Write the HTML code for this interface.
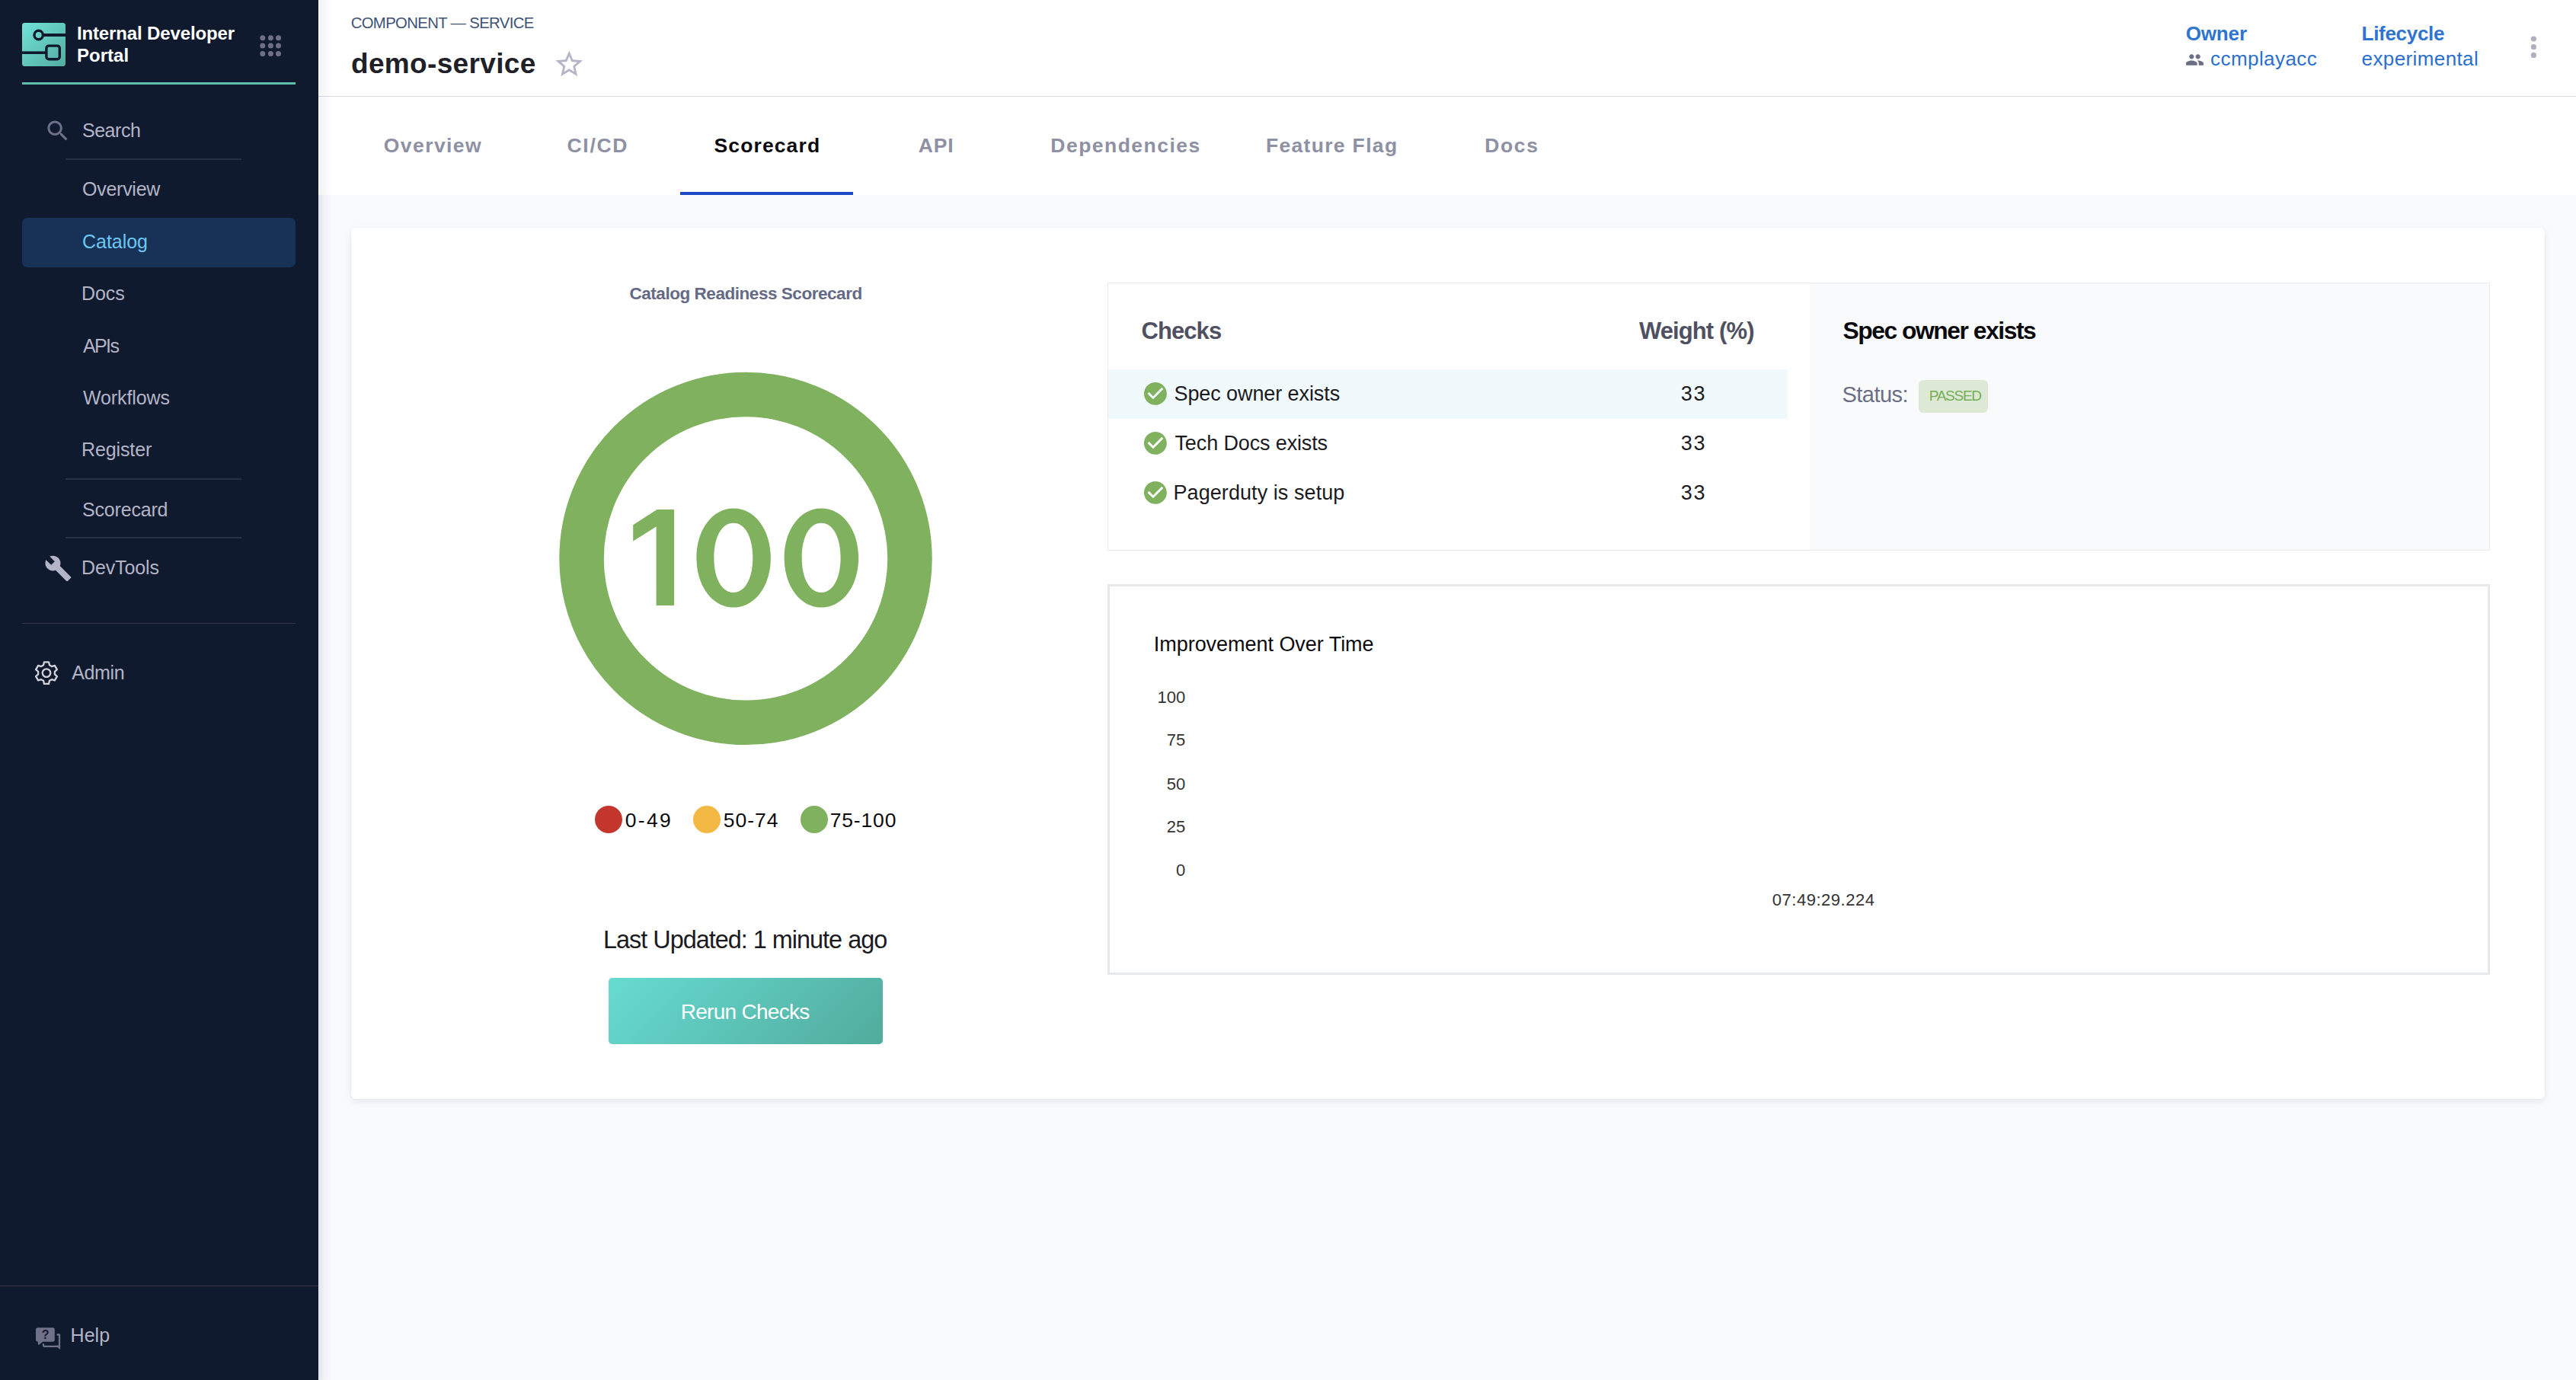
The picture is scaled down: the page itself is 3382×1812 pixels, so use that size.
<!DOCTYPE html>
<html><head><meta charset="utf-8"><title>demo-service | Scorecard</title>
<style>
html,body{margin:0;padding:0;width:3382px;height:1812px;overflow:hidden;background:#f9fafd;font-family:"Liberation Sans",sans-serif}
.a{position:absolute}
.t{position:absolute;white-space:nowrap;font-family:"Liberation Sans",sans-serif}
</style></head><body>
<!-- sidebar -->
<div class="a" style="left:0;top:0;width:418px;height:1812px;background:#0f1a2e;box-shadow:1px 0 8px rgba(20,30,60,0.10)"></div>
<!-- logo -->
<svg class="a" style="left:29px;top:30px" width="57" height="57" viewBox="0 0 57 57">
<defs><linearGradient id="lg" gradientUnits="userSpaceOnUse" x1="0" y1="0" x2="57" y2="57"><stop offset="0" stop-color="#6fe3d8"/><stop offset="1" stop-color="#55ab9f"/></linearGradient></defs>
<rect x="0" y="0" width="57" height="57" rx="3.5" fill="url(#lg)"/>
<line x1="26" y1="16" x2="57" y2="16" stroke="#0f1a2e" stroke-width="4"/>
<circle cx="21.7" cy="16" r="5.7" fill="url(#lg)" stroke="#0f1a2e" stroke-width="3.4"/>
<line x1="0" y1="39.2" x2="32" y2="39.2" stroke="#0f1a2e" stroke-width="3.6"/>
<rect x="31.9" y="30.1" width="17.4" height="17.7" rx="3.3" fill="url(#lg)" stroke="#0f1a2e" stroke-width="3.4"/>
</svg>
<!-- 9 dots -->
<svg class="a" style="left:338px;top:43px" width="34" height="34" viewBox="338 43 34 34" fill="#6f7088">
<circle cx="344.8" cy="49.7" r="3.5"/><circle cx="355.4" cy="49.7" r="3.5"/><circle cx="365.5" cy="49.7" r="3.5"/>
<circle cx="344.8" cy="60.1" r="3.5"/><circle cx="355.4" cy="60.1" r="3.5"/><circle cx="365.5" cy="60.1" r="3.5"/>
<circle cx="344.8" cy="70.4" r="3.5"/><circle cx="355.4" cy="70.4" r="3.5"/><circle cx="365.5" cy="70.4" r="3.5"/>
</svg>
<div class="a" style="left:29px;top:108px;width:359px;height:3px;background:#5ebfa9"></div>
<!-- search icon -->
<svg class="a" style="left:57.8px;top:153.8px" width="35.7" height="35.7" viewBox="0 0 24 24"><path fill="#6e7089" d="M15.5 14h-.79l-.28-.27C15.41 12.59 16 11.11 16 9.5 16 5.91 13.09 3 9.5 3S3 5.91 3 9.5 5.91 16 9.5 16c1.61 0 3.09-.59 4.23-1.570l.27.28v.79l5 4.99L20.49 19l-4.99-5zm-6 0C7.010 14 5 11.99 5 9.5S7.01 5 9.5 5 14 7.01 14 9.5 11.99 14 9.5 14z"/></svg>
<div class="a" style="left:86px;top:208px;width:231px;height:2px;background:#283043"></div>
<!-- catalog highlight -->
<div class="a" style="left:29px;top:286px;width:359px;height:65px;background:#183157;border-radius:7px"></div>
<div class="a" style="left:86px;top:628px;width:231px;height:2px;background:#283043"></div>
<div class="a" style="left:86px;top:705px;width:231px;height:2px;background:#283043"></div>
<!-- wrench -->
<svg class="a" style="left:57.5px;top:727.5px" width="36.8" height="36.8" viewBox="0 0 24 24"><path fill="#b3b4c6" d="M22.7 19l-9.1-9.1c.9-2.3.4-5-1.5-6.9-2-2-5-2.4-7.4-1.3L9 6 6 9 1.6 4.7C.4 7.1.9 10.1 2.9 12.1c1.9 1.9 4.6 2.4 6.9 1.5l9.1 9.1c.4.4 1 .4 1.4 0l2.3-2.3c.5-.4.5-1.1.1-1.4z"/></svg>
<div class="a" style="left:29px;top:818px;width:359px;height:1px;background:#383845"></div>
<!-- gear -->
<svg class="a" style="left:40px;top:863px" width="42" height="42" viewBox="40 863 42 42"><path d="M57.06,873.33 L57.96,869.32 L64.04,869.32 L64.94,873.33 L67.92,875.05 L71.85,873.83 L74.89,879.09 L71.86,881.88 L71.86,885.32 L74.89,888.11 L71.85,893.37 L67.92,892.15 L64.94,893.87 L64.04,897.88 L57.96,897.88 L57.06,893.87 L54.08,892.15 L50.15,893.37 L47.11,888.11 L50.14,885.32 L50.14,881.88 L47.11,879.09 L50.15,873.83 L54.08,875.05 Z" fill="none" stroke="#d2d2da" stroke-width="2.3" stroke-linejoin="round"/><circle cx="61" cy="883.6" r="5.3" fill="none" stroke="#d2d2da" stroke-width="2.3"/></svg>
<div class="a" style="left:0;top:1688px;width:418px;height:1px;background:#3a3b47"></div>
<!-- help icon -->
<svg class="a" style="left:40px;top:1735px" width="50" height="45" viewBox="40 1735 50 45">
<path fill="none" stroke="#6f7189" stroke-width="2.3" stroke-linejoin="round" d="M74.6,1752.5 H78 V1767.8 H58.6 Q56.9,1767.8 56.9,1766.1 V1764.2"/>
<path fill="#6f7189" d="M72.4,1766.8 H79.1 V1771.9 Z"/>
<path fill="#6f7189" stroke="#0f1a2e" stroke-width="2.4" paint-order="stroke" d="M49.6,1743.2 H69.3 Q71.8,1743.2 71.8,1745.7 V1759.2 Q71.8,1761.7 69.3,1761.7 H56.3 L51.3,1765.8 L49.8,1765.6 V1761.6 Q47,1761.4 47,1758.9 V1745.7 Q47,1743.2 49.6,1743.2 Z"/>
<text x="59.7" y="1758.3" font-family="Liberation Sans" font-weight="700" font-size="16" fill="#0f1a2e" text-anchor="middle">?</text>
</svg>

<!-- header -->
<div class="a" style="left:418px;top:0;width:2964px;height:126px;background:#ffffff"></div>
<div class="a" style="left:418px;top:126px;width:2964px;height:1px;background:#dcdde6"></div>
<div class="a" style="left:418px;top:127px;width:2964px;height:129px;background:#ffffff"></div>
<div class="a" style="left:419px;top:0;width:18px;height:1812px;background:linear-gradient(to right,rgba(20,30,70,0.055),rgba(20,30,70,0))"></div>
<!-- star -->
<svg class="a" style="left:725.9px;top:62.5px" width="42.5" height="42.5" viewBox="0 0 24 24"><path fill="#b4b6c8" d="M22 9.24l-7.19-.62L12 2 9.19 8.63 2 9.24l5.46 4.73L5.82 21 12 17.27 18.18 21l-1.63-7.03L22 9.24zM12 15.4l-3.76 2.27 1-4.28-3.32-2.88 4.38-.38L12 6.1l1.71 4.04 4.38.38-3.32 2.88 1 4.28L12 15.4z"/></svg>
<!-- people icon -->
<svg class="a" style="left:2869px;top:65.6px" width="25" height="25" viewBox="0 0 24 24"><path fill="#6b6e85" d="M16 11c1.66 0 2.99-1.34 2.99-3S17.660 5 16 5c-1.66 0-3 1.34-3 3s1.34 3 3 3zm-8 0c1.66 0 2.99-1.34 2.99-3S9.66 5 8 5C6.34 5 5 6.34 5 8s1.34 3 3 3zm0 2c-2.33 0-7 1.17-7 3.5V19h14v-2.5c0-2.33-4.67-3.5-7-3.5zm8 0c-.29 0-.62.02-.97.05 1.16.84 1.97 1.97 1.97 3.45V19h6v-2.5c0-2.33-4.67-3.5-7-3.5z"/></svg>
<!-- kebab -->
<svg class="a" style="left:3318px;top:43px" width="17" height="38" viewBox="3318 43 17 38" fill="#b0b1c0">
<circle cx="3326.4" cy="51" r="3.6"/><circle cx="3326.4" cy="61.7" r="3.6"/><circle cx="3326.4" cy="72.4" r="3.6"/>
</svg>
<!-- tab indicator -->
<div class="a" style="left:893px;top:252px;width:227px;height:4px;background:#1d4ac8"></div>

<!-- card -->
<div class="a" style="left:461px;top:299px;width:2880px;height:1144px;background:#ffffff;border-radius:6px;box-shadow:0 0 2px rgba(40,41,61,0.07),0 3px 8px rgba(96,97,112,0.13)"></div>
<!-- ring -->
<svg class="a" style="left:720px;top:470px" width="520" height="520" viewBox="720 470 520 520">
<circle cx="979" cy="733.4" r="215.45" fill="none" stroke="#7fb15e" stroke-width="58.5"/>
</svg>
<svg class="a" style="left:820px;top:655px" width="320" height="155" viewBox="820 655 320 155"><path fill="#7fb15e" fill-rule="evenodd" d="M862.6,669 L885,669 L885,795 L861.6,795 L861.6,691.6 L831.2,710.5 L831.2,689.2 Z M914.40,732.50 C914.40,695.39 935.36,667.40 963.15,667.40 C990.94,667.40 1011.90,695.39 1011.90,732.50 C1011.90,769.61 990.94,797.60 963.15,797.60 C935.36,797.60 914.40,769.61 914.40,732.50 Z M937.40,732.35 C937.40,704.96 947.58,686.70 962.85,686.70 C978.12,686.70 988.30,704.96 988.30,732.35 C988.30,759.74 978.12,778.00 962.85,778.00 C947.58,778.00 937.40,759.74 937.40,732.35 Z M1029.65,732.50 C1029.65,695.39 1050.61,667.40 1078.40,667.40 C1106.19,667.40 1127.15,695.39 1127.15,732.50 C1127.15,769.61 1106.19,797.60 1078.40,797.60 C1050.61,797.60 1029.65,769.61 1029.65,732.50 Z M1052.70,732.35 C1052.70,704.96 1062.88,686.70 1078.15,686.70 C1093.42,686.70 1103.60,704.96 1103.60,732.35 C1103.60,759.74 1093.42,778.00 1078.15,778.00 C1062.88,778.00 1052.70,759.74 1052.70,732.35 Z"/></svg>
<!-- legend dots -->
<div class="a" style="left:781px;top:1057.8px;width:36px;height:36px;border-radius:50%;background:#c4362b"></div>
<div class="a" style="left:910px;top:1057.8px;width:36px;height:36px;border-radius:50%;background:#f3b843"></div>
<div class="a" style="left:1051px;top:1057.8px;width:36px;height:36px;border-radius:50%;background:#7fb15e"></div>
<!-- button -->
<div class="a" style="left:799px;top:1284px;width:360px;height:87px;border-radius:5px;background:linear-gradient(135deg,#67dbd1 0%,#5cc3b7 50%,#50ab9c 100%)"></div>

<!-- checks box -->
<div class="a" style="left:1454px;top:371px;width:1813px;height:350px;border:1px solid #e9e9ef;background:#ffffff"></div>
<div class="a" style="left:2376px;top:372px;width:892px;height:350px;background:#f9fafc"></div>
<div class="a" style="left:1455px;top:485px;width:892px;height:65px;background:#f0f9fc"></div>
<!-- check circles -->
<svg class="a" style="left:1499px;top:499px" width="35.8" height="35.8" viewBox="0 0 24 24"><path fill="#7fb15e" d="M12 2C6.48 2 2 6.48 2 12s4.48 10 10 10 10-4.48 10-10S17.52 2 12 2zm-2 15l-5-5 1.41-1.41L10 14.17l7.59-7.59L19 8l-9 9z"/></svg>
<svg class="a" style="left:1499px;top:564.2px" width="35.8" height="35.8" viewBox="0 0 24 24"><path fill="#7fb15e" d="M12 2C6.48 2 2 6.48 2 12s4.48 10 10 10 10-4.48 10-10S17.52 2 12 2zm-2 15l-5-5 1.41-1.41L10 14.17l7.59-7.59L19 8l-9 9z"/></svg>
<svg class="a" style="left:1499px;top:629.4px" width="35.8" height="35.8" viewBox="0 0 24 24"><path fill="#7fb15e" d="M12 2C6.48 2 2 6.48 2 12s4.48 10 10 10 10-4.48 10-10S17.52 2 12 2zm-2 15l-5-5 1.41-1.41L10 14.17l7.59-7.59L19 8l-9 9z"/></svg>
<!-- badge -->
<div class="a" style="left:2519px;top:498.7px;width:91px;height:43px;border-radius:6px;background:#dde9d5"></div>

<!-- chart box -->
<div class="a" style="left:1454px;top:767px;width:1809px;height:507px;border:3px solid #e7e8eb;background:#ffffff"></div>

<div class="t" style="left:100.9px;top:31.8px;font-size:24px;line-height:24px;color:#ffffff;font-weight:700;letter-spacing:-0.13px">Internal Developer</div>
<div class="t" style="left:100.9px;top:60.6px;font-size:24px;line-height:24px;color:#ffffff;font-weight:700;letter-spacing:0.05px">Portal</div>
<div class="t" style="left:108px;top:159.2px;font-size:25px;line-height:25px;color:#b3b4c6;letter-spacing:-0.48px">Search</div>
<div class="t" style="left:108px;top:236.2px;font-size:25px;line-height:25px;color:#b3b4c6;letter-spacing:-0.26px">Overview</div>
<div class="t" style="left:108px;top:305.1px;font-size:25px;line-height:25px;color:#6cc6f2;letter-spacing:-0.04px">Catalog</div>
<div class="t" style="left:107px;top:373px;font-size:25px;line-height:25px;color:#b3b4c6;letter-spacing:-0.09px">Docs</div>
<div class="t" style="left:109px;top:442.2px;font-size:25px;line-height:25px;color:#b3b4c6;letter-spacing:-1.63px">APIs</div>
<div class="t" style="left:109px;top:510.4px;font-size:25px;line-height:25px;color:#b3b4c6;letter-spacing:-0.1px">Workflows</div>
<div class="t" style="left:107px;top:578.1px;font-size:25px;line-height:25px;color:#b3b4c6;letter-spacing:-0.12px">Register</div>
<div class="t" style="left:108px;top:656.5px;font-size:25px;line-height:25px;color:#b3b4c6;letter-spacing:-0.18px">Scorecard</div>
<div class="t" style="left:107px;top:733.3px;font-size:25px;line-height:25px;color:#b3b4c6;letter-spacing:-0.12px">DevTools</div>
<div class="t" style="left:94.2px;top:871.4px;font-size:25px;line-height:25px;color:#b3b4c6;letter-spacing:-0.34px">Admin</div>
<div class="t" style="left:92.6px;top:1741.3px;font-size:25px;line-height:25px;color:#b3b4c6;letter-spacing:0.03px">Help</div>
<div class="t" style="left:460.7px;top:20px;font-size:20.3px;line-height:20.3px;color:#3e5275;letter-spacing:-0.62px">COMPONENT — SERVICE</div>
<div class="t" style="left:461px;top:64.9px;font-size:37px;line-height:37px;color:#202128;font-weight:700;letter-spacing:0.34px">demo-service</div>
<div class="t" style="left:503.85px;top:177.9px;font-size:26.5px;line-height:26.5px;color:#8e90a3;font-weight:700;letter-spacing:1.41px">Overview</div>
<div class="t" style="left:744.55px;top:177.9px;font-size:26.5px;line-height:26.5px;color:#8e90a3;font-weight:700;letter-spacing:1.68px">CI/CD</div>
<div class="t" style="left:937.5px;top:177.9px;font-size:26.5px;line-height:26.5px;color:#0b0b0f;font-weight:700;letter-spacing:1.12px">Scorecard</div>
<div class="t" style="left:1205.75px;top:177.9px;font-size:26.5px;line-height:26.5px;color:#8e90a3;font-weight:700;letter-spacing:0.84px">API</div>
<div class="t" style="left:1379.35px;top:177.9px;font-size:26.5px;line-height:26.5px;color:#8e90a3;font-weight:700;letter-spacing:1.47px">Dependencies</div>
<div class="t" style="left:1661.9px;top:177.9px;font-size:26.5px;line-height:26.5px;color:#8e90a3;font-weight:700;letter-spacing:1.33px">Feature Flag</div>
<div class="t" style="left:1949.25px;top:177.9px;font-size:26.5px;line-height:26.5px;color:#8e90a3;font-weight:700;letter-spacing:1.61px">Docs</div>
<div class="t" style="left:2869.7px;top:31px;font-size:26px;line-height:26px;color:#2f74d0;font-weight:700;letter-spacing:-0.15px">Owner</div>
<div class="t" style="left:2902.1px;top:64px;font-size:26px;line-height:26px;color:#2a6fcf;letter-spacing:0.42px">ccmplayacc</div>
<div class="t" style="left:3100.6px;top:31px;font-size:26px;line-height:26px;color:#2f74d0;font-weight:700;letter-spacing:-0.3px">Lifecycle</div>
<div class="t" style="left:3100.6px;top:64px;font-size:26px;line-height:26px;color:#2a6fcf;letter-spacing:0.39px">experimental</div>
<div class="t" style="left:826.5px;top:374.7px;font-size:22.5px;line-height:22.5px;color:#646a85;font-weight:700;letter-spacing:-0.46px">Catalog Readiness Scorecard</div>
<div class="t" style="left:820.7px;top:1064px;font-size:26.5px;line-height:26.5px;color:#0b0b0f;letter-spacing:2.33px">0-49</div>
<div class="t" style="left:949.7px;top:1064px;font-size:26.5px;line-height:26.5px;color:#0b0b0f;letter-spacing:0.99px">50-74</div>
<div class="t" style="left:1089.7px;top:1064px;font-size:26.5px;line-height:26.5px;color:#0b0b0f;letter-spacing:0.84px">75-100</div>
<div class="t" style="left:792px;top:1218px;font-size:32.4px;line-height:32.4px;color:#1b1b1f;letter-spacing:-0.99px">Last Updated: 1 minute ago</div>
<div class="t" style="left:893.7px;top:1314.7px;font-size:28px;line-height:28px;color:#ffffff;letter-spacing:-0.71px">Rerun Checks</div>
<div class="t" style="left:1498.6px;top:419px;font-size:31px;line-height:31px;color:#4f5162;font-weight:700;letter-spacing:-0.95px">Checks</div>
<div class="t" style="left:2151.9px;top:419px;font-size:31px;line-height:31px;color:#4f5162;font-weight:700;letter-spacing:-0.89px">Weight (%)</div>
<div class="t" style="left:1541.5px;top:503.9px;font-size:27px;line-height:27px;color:#1b1b1f;letter-spacing:-0.09px">Spec owner exists</div>
<div class="t" style="left:2206.8px;top:503.9px;font-size:27px;line-height:27px;color:#1b1b1f;letter-spacing:1.78px">33</div>
<div class="t" style="left:1542.5px;top:569.1px;font-size:27px;line-height:27px;color:#1b1b1f;letter-spacing:-0.13px">Tech Docs exists</div>
<div class="t" style="left:2206.8px;top:569.1px;font-size:27px;line-height:27px;color:#1b1b1f;letter-spacing:1.78px">33</div>
<div class="t" style="left:1540.5px;top:634.3px;font-size:27px;line-height:27px;color:#1b1b1f;letter-spacing:0.07px">Pagerduty is setup</div>
<div class="t" style="left:2206.8px;top:634.3px;font-size:27px;line-height:27px;color:#1b1b1f;letter-spacing:1.78px">33</div>
<div class="t" style="left:2419.5px;top:418.7px;font-size:31.8px;line-height:31.8px;color:#0b0b0f;font-weight:700;letter-spacing:-1.45px">Spec owner exists</div>
<div class="t" style="left:2418.5px;top:503.9px;font-size:29px;line-height:29px;color:#6b6e85;letter-spacing:-0.55px">Status:</div>
<div class="t" style="left:2532.7px;top:509.9px;font-size:19px;line-height:19px;color:#74ad55;letter-spacing:-1.27px">PASSED</div>
<div class="t" style="left:1514.8px;top:833.4px;font-size:27px;line-height:27px;color:#0b0b0f;letter-spacing:-0.04px">Improvement Over Time</div>
<div class="t" style="left:1519.53px;top:904.9px;font-size:22px;line-height:22px;color:#333333">100</div>
<div class="t" style="left:1531.76px;top:961.3px;font-size:22px;line-height:22px;color:#333333">75</div>
<div class="t" style="left:1531.76px;top:1018.5px;font-size:22px;line-height:22px;color:#333333">50</div>
<div class="t" style="left:1531.76px;top:1074.5px;font-size:22px;line-height:22px;color:#333333">25</div>
<div class="t" style="left:1544px;top:1132.1px;font-size:22px;line-height:22px;color:#333333">0</div>
<div class="t" style="left:2326.8px;top:1170.8px;font-size:22px;line-height:22px;color:#333333;letter-spacing:0.51px">07:49:29.224</div>
</body></html>
